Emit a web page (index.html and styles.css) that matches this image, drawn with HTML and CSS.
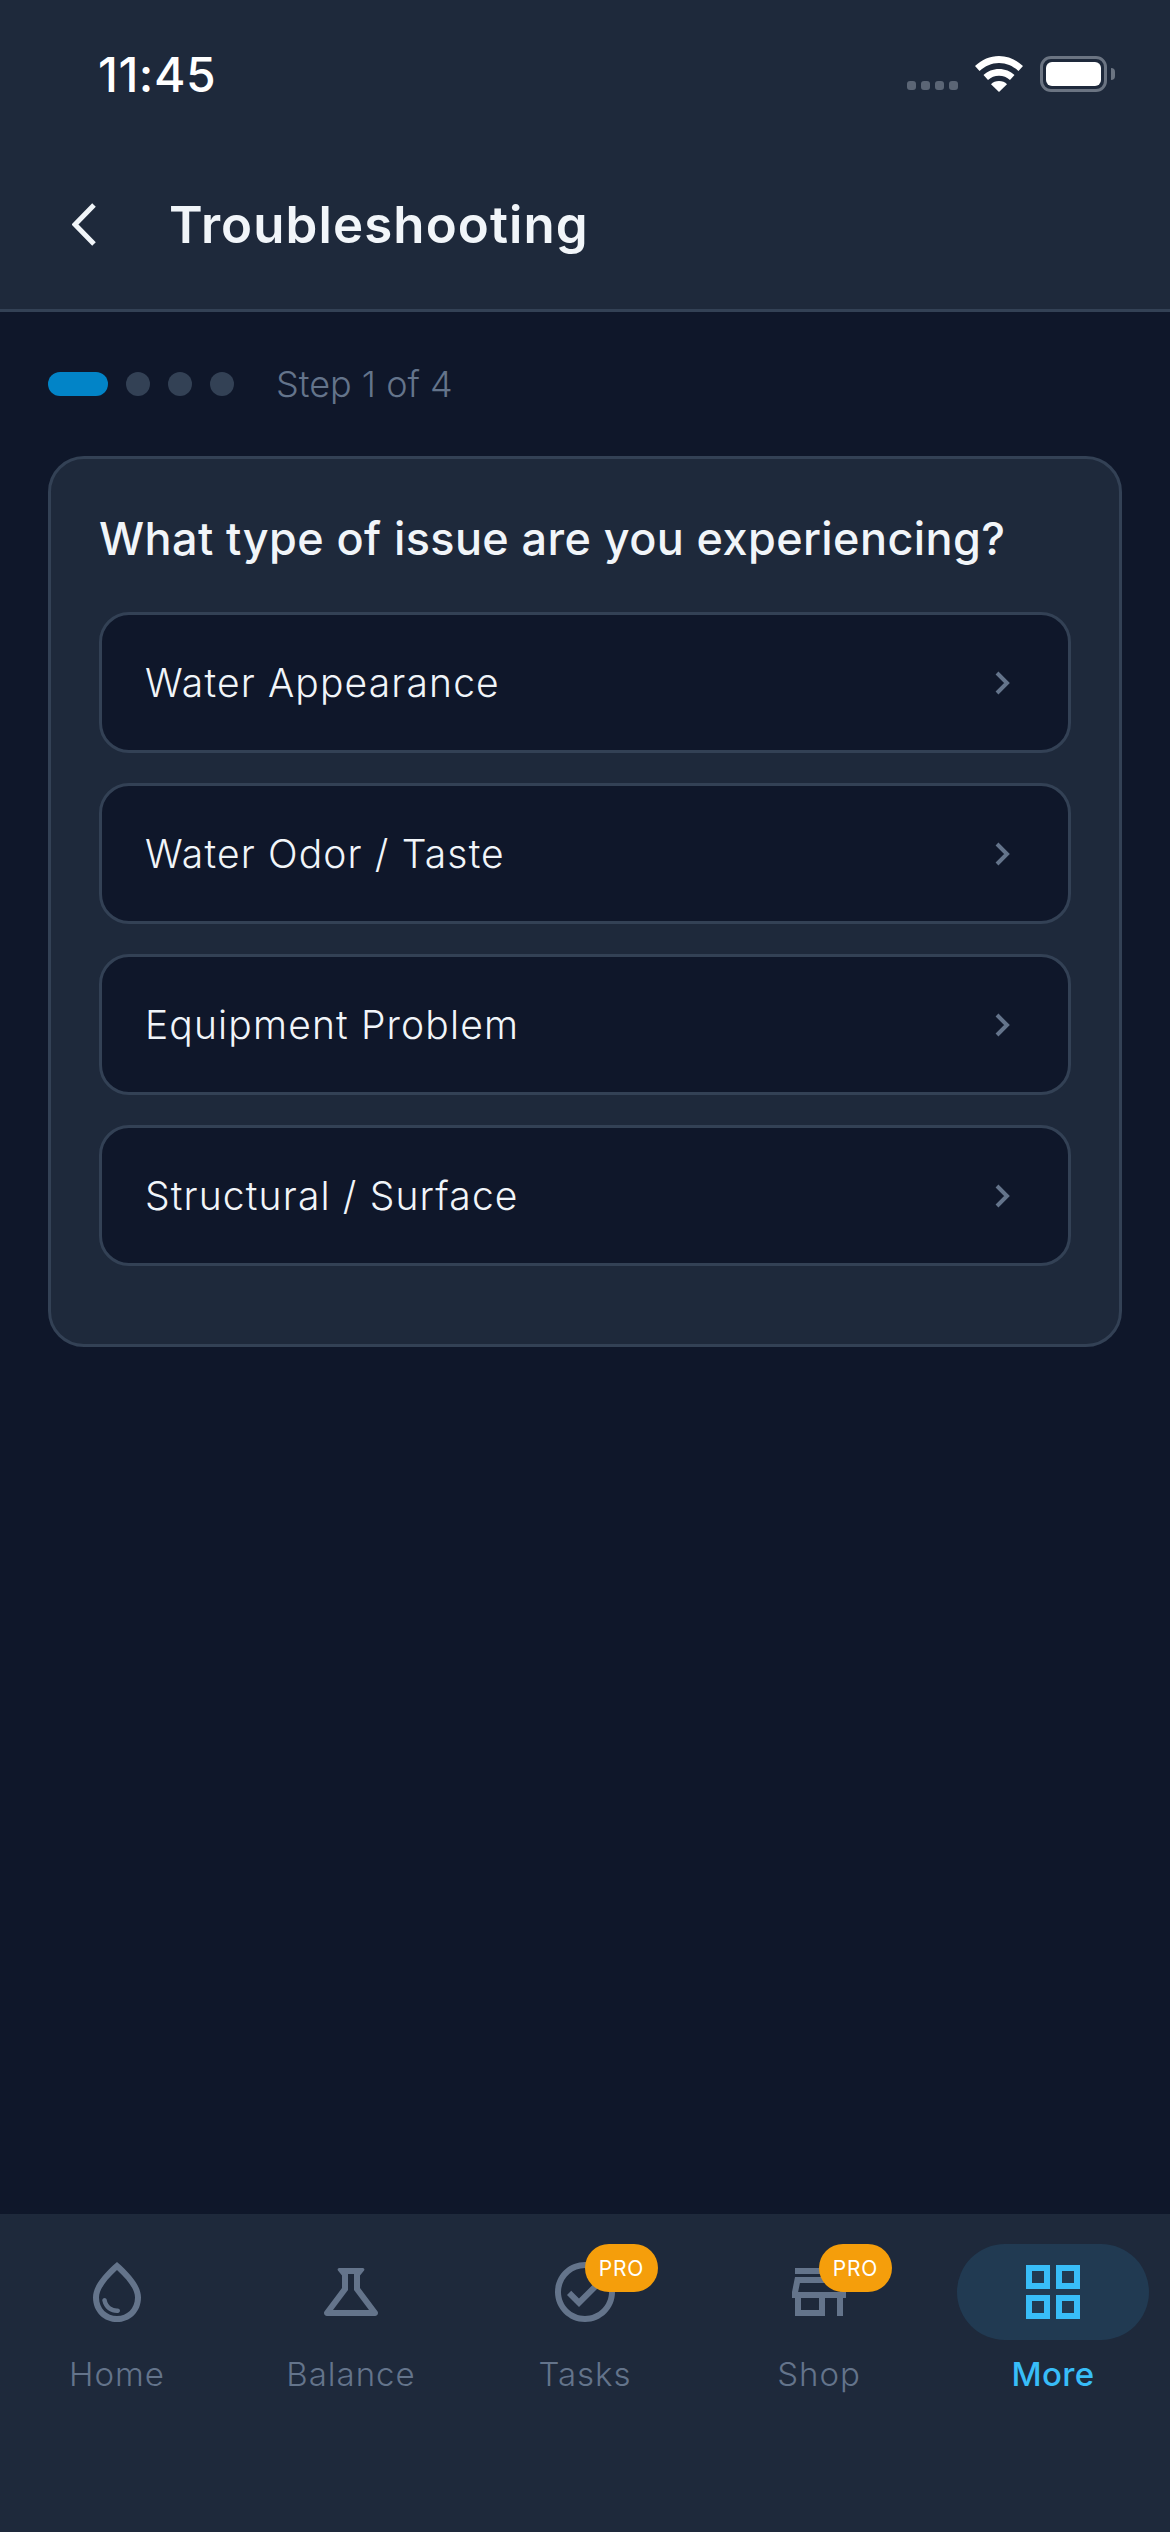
FILE: index.html
```html
<!DOCTYPE html>
<html lang="en">
<head>
  <meta charset="UTF-8" />
  <meta name="viewport" content="width=device-width, initial-scale=1.0" />
  <title>Troubleshooting</title>
  <link rel="stylesheet" href="styles.css">
</head>
<body>
  <div class="screen">

    <!-- HEADER -->
    <header class="header">
      <div class="status-bar">
        <span class="clock">11:45</span>
        <div class="status-icons">
          <div class="signal"><i></i><i></i><i></i><i></i></div>
          <svg class="wifi" viewBox="0 0 48 36">
            <path d="M24 0C15 0 7 3.500 0 10l4.500 5C10 10 16.500 7 24 7s14 3 19.500 8L48 10C41 3.500 33 0 24 0z"/>
            <path d="M24 13c-6 0-11.500 2.200-15.500 6l4.500 5c3-2.800 6.800-4.300 11-4.300s8 1.500 11 4.300l4.500-5C35.500 15.200 30 13 24 13z"/>
            <path d="M24 25c-3.200 0-6 1.200-8 3.200L24 36l8-7.800C30 26.200 27.200 25 24 25z"/>
          </svg>
          <div class="battery"><div class="battery-fill"></div></div>
          <div class="battery-nub"></div>
        </div>
      </div>
      <div class="app-bar">
        <svg class="back" viewBox="0 0 24 43"><path d="M22 2 3 21.500 22 41"/></svg>
        <h1>Troubleshooting</h1>
      </div>
    </header>

    <!-- CONTENIDO -->
    <main class="content">
      <div class="steps">
        <span class="step-pill"></span>
        <span class="step-dot"></span>
        <span class="step-dot"></span>
        <span class="step-dot"></span>
        <span class="step-label">Step 1 of 4</span>
      </div>

      <section class="card">
        <h2>What type of issue are you experiencing?</h2>
        <a class="option">
          <span>Water Appearance</span>
          <svg class="chevron" viewBox="0 0 15 24"><path d="M2 2l10 10L2 22"/></svg>
        </a>
        <a class="option">
          <span>Water Odor / Taste</span>
          <svg class="chevron" viewBox="0 0 15 24"><path d="M2 2l10 10L2 22"/></svg>
        </a>
        <a class="option">
          <span>Equipment Problem</span>
          <svg class="chevron" viewBox="0 0 15 24"><path d="M2 2l10 10L2 22"/></svg>
        </a>
        <a class="option">
          <span>Structural / Surface</span>
          <svg class="chevron" viewBox="0 0 15 24"><path d="M2 2l10 10L2 22"/></svg>
        </a>
      </section>
    </main>

    <!-- NAVEGACION -->
    <nav class="tabs">
      <div class="tab">
        <div class="tab-icon">
          <svg viewBox="0 0 24 24"><path d="M12,2c-5.330,4.550-8,8.480-8,11.800c0,4.980,3.800,8.200,8,8.200s8-3.220,8-8.200C20,10.480,17.330,6.550,12,2z M12,20c-3.350,0-6-2.570-6-6.200c0-2.340,1.950-5.440,6-9.140c4.050,3.700,6,6.790,6,9.140C18,17.430,15.350,20,12,20z M7.830,14c0.370,0,0.670,0.260,0.740,0.620c0.410,2.220,2.280,2.980,3.640,2.870c0.430-0.020,0.790,0.320,0.790,0.750c0,0.400-0.320,0.730-0.720,0.750c-2.130,0.130-4.620-1.090-5.190-4.120C7.010,14.420,7.370,14,7.830,14z"/></svg>
        </div>
        <span class="tab-label">Home</span>
      </div>
      <div class="tab">
        <div class="tab-icon">
          <svg viewBox="0 0 24 24"><path d="M13 11.330L18 18H6l5-6.670V6h2m2.960-2H8.040c-.42 0-.65.48-.39.81L9 6.500v4.170L3.200 18.400c-.49.66-.02 1.600.8 1.600h16c.82 0 1.290-.94.8-1.600L15 10.670V6.500l1.350-1.690c.26-.33.03-.81-.39-.81z"/></svg>
        </div>
        <span class="tab-label">Balance</span>
      </div>
      <div class="tab">
        <div class="tab-icon">
          <svg viewBox="0 0 24 24"><path d="M12 2C6.480 2 2 6.480 2 12s4.480 10 10 10 10-4.480 10-10S17.520 2 12 2zm0 18c-4.410 0-8-3.590-8-8s3.590-8 8-8 8 3.590 8 8-3.590 8-8 8zm4.590-12.420L10 14.170l-2.590-2.580L6 13l4 4 8-8z"/></svg>
          <span class="pro">PRO</span>
        </div>
        <span class="tab-label">Tasks</span>
      </div>
      <div class="tab">
        <div class="tab-icon">
          <svg viewBox="0 0 24 24"><path d="M18.360 9l.6 3H5.040l.6-3h12.720M20 4H4v2h16V4zm0 3H4l-1 5v2h1v6h10v-6h4v6h2v-6h1v-2l-1-5zM6 18v-4h6v4H6z"/></svg>
          <span class="pro">PRO</span>
        </div>
        <span class="tab-label">Shop</span>
      </div>
      <div class="tab active">
        <div class="tab-icon">
          <svg viewBox="0 0 24 24"><path d="M3 3v8h8V3H3zm6 6H5V5h4v4zm-6 4v8h8v-8H3zm6 6H5v-4h4v4zm4-16v8h8V3h-8zm6 6h-4V5h4v4zm-6 4v8h8v-8h-8zm6 6h-4v-4h4v4z"/></svg>
        </div>
        <span class="tab-label">More</span>
      </div>
    </nav>
  </div>
</body>
</html>
```

FILE: styles.css
```css
* {
  box-sizing: border-box;
}

body {
  margin: 0;
  background-color: #0f172a;
  font-family: Inter, "Noto Sans", sans-serif;
}

.screen {
  display: flex;
  flex-direction: column;
  width: 1170px;
  height: 2532px;
}

/* header */
.header {
  height: 312px;
  background-color: #1e293b;
  border-bottom: 3px solid #334155;
}

.status-bar {
  display: flex;
  justify-content: space-between;
  align-items: center;
  height: 148px;
  padding: 0 55px 0 98px;
}

.clock {
  color: #fff;
  font-size: 48px;
  font-weight: 500;
  letter-spacing: 0.5px;
}

.status-icons {
  display: flex;
  align-items: center;
}

.signal {
  display: flex;
  gap: 5px;
  margin: 22px 17px 0 0;
}

.signal i {
  width: 9px;
  height: 9px;
  border-radius: 3px;
  background-color: #5b6575;
}

.wifi {
  width: 48px;
  height: 36px;
  fill: #fff;
  margin-right: 17px;
}

.battery {
  width: 67px;
  height: 36px;
  padding: 3px;
  border: 3px solid #6b7482;
  border-radius: 11px;
}

.battery-fill {
  height: 100%;
  background-color: #fff;
  border-radius: 6px;
}

.battery-nub {
  width: 4px;
  height: 12px;
  margin-left: 4px;
  background-color: #6b7482;
  border-radius: 0 6px 6px 0;
}

.app-bar {
  display: flex;
  align-items: center;
  height: 75px;
  margin-top: 39px;
  padding-left: 72px;
}

.back {
  width: 24px;
  height: 43px;
  fill: none;
  stroke: #f1f5f9;
  stroke-width: 5;
  margin-right: 73px;
}

h1 {
  margin: 0;
  color: #f1f5f9;
  font-size: 51px;
  font-weight: 600;
  letter-spacing: 1.1px;
}

/* contenido */
.content {
  flex: 1;
  padding: 60px 48px 0;
}

.steps {
  display: flex;
  align-items: center;
  gap: 18px;
  height: 24px;
  margin-bottom: 60px;
}

.step-pill {
  width: 60px;
  height: 24px;
  border-radius: 12px;
  background-color: #0284c7;
}

.step-dot {
  width: 24px;
  height: 24px;
  border-radius: 50%;
  background-color: #334155;
}

.step-label {
  margin-left: 24px;
  color: #64748b;
  font-size: 36px;
  font-weight: 300;
}

.card {
  padding: 51px 48px 18px;
  background-color: #1e293b;
  border: 3px solid #334155;
  border-radius: 36px;
}

h2 {
  margin: 0 0 45px;
  color: #f1f5f9;
  font-size: 45px;
  font-weight: 450;
  letter-spacing: 0.4px;
  line-height: 57px;
}

.option {
  display: flex;
  justify-content: space-between;
  align-items: center;
  height: 141px;
  margin-bottom: 30px;
  padding: 0 58px 0 43px;
  background-color: #0f172a;
  border: 3px solid #334155;
  border-radius: 30px;
  color: #f1f5f9;
  font-size: 39px;
  font-weight: 300;
  letter-spacing: 1.15px;
}

.option:last-child {
  margin-bottom: 60px;
}

.chevron {
  width: 15px;
  height: 24px;
  fill: none;
  stroke: #64748b;
  stroke-width: 4;
}

/* navegacion */
.tabs {
  display: grid;
  grid-template-columns: repeat(5, 234px);
  height: 318px;
  padding-top: 30px;
  background-color: #1e293b;
}

.tab {
  display: flex;
  flex-direction: column;
  align-items: center;
}

.tab-icon {
  position: relative;
  display: flex;
  justify-content: center;
  align-items: center;
  width: 192px;
  height: 96px;
  border-radius: 48px;
  margin-bottom: 14px;
}

.tab-icon svg {
  width: 72px;
  height: 72px;
  fill: #64748b;
}

.tab-label {
  color: #64748b;
  font-size: 33px;
  font-weight: 300;
  letter-spacing: 1px;
}

.pro {
  position: absolute;
  top: 0;
  left: 96px;
  width: 73px;
  height: 48px;
  border-radius: 24px;
  background-color: #f59e0b;
  color: #fff;
  font-size: 21px;
  font-weight: 400;
  letter-spacing: 0.8px;
  line-height: 50px;
  text-align: center;
}

.active .tab-icon {
  background-color: #213a52;
}

.active .tab-icon svg {
  fill: #38bdf8;
}

.active .tab-label {
  color: #38bdf8;
  font-weight: 500;
  letter-spacing: 0.3px;
}
```
